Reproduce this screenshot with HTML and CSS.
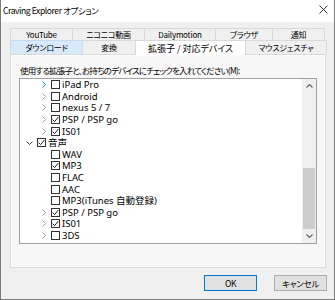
FILE: index.html
```html
<!DOCTYPE html>
<html lang="ja">

<head>
    <meta charset="UTF-8">
    <title>Craving Explorer オプション</title>
    <link rel="stylesheet" href="styles.css">
</head>

<body>
    <div class="window">
        <div class="titlebar">
            <span class="title">Craving Explorer オプション</span>
            <svg class="close" width="9" height="9" viewBox="0 0 9 9">
                <path d="M0.5 0.5 L8.5 8.5 M8.5 0.5 L0.5 8.5" stroke="#222" stroke-width="0.9" fill="none" />
            </svg>
        </div>

        <div class="client">
            <div class="tabrow row1">
                <div class="tab t-youtube">YouTube</div>
                <div class="tab t-nico">ニコニコ動画</div>
                <div class="tab t-daily">Dailymotion</div>
                <div class="tab t-browser">ブラウザ</div>
                <div class="tab t-notify">通知</div>
            </div>
            <div class="tabrow row2">
                <div class="tab hover t-download">ダウンロード</div>
                <div class="tab t-convert">変換</div>
                <div class="tab active t-ext">拡張子 / 対応デバイス</div>
                <div class="tab t-mouse">マウスジェスチャ</div>
            </div>

            <div class="panel">
                <div class="label">使用する拡張子と、お持ちのデバイスにチェックを入れてください(M):</div>
                <div class="tree">
                    <div class="rows">
                        <div class="row lv1"><span class="arrow hot"></span><span class="check"></span>iPad Pro</div>
                        <div class="row lv1"><span class="arrow"></span><span class="check"></span>Android</div>
                        <div class="row lv1"><span class="arrow"></span><span class="check"></span>nexus 5 / 7</div>
                        <div class="row lv1"><span class="arrow"></span><span class="check on"></span>PSP / PSP go</div>
                        <div class="row lv1"><span class="arrow"></span><span class="check on"></span>IS01</div>
                        <div class="row lv0"><span class="arrow open"></span><span class="check on"></span>音声</div>
                        <div class="row lv1"><span class="arrow none"></span><span class="check"></span>WAV</div>
                        <div class="row lv1"><span class="arrow none"></span><span class="check on"></span>MP3</div>
                        <div class="row lv1"><span class="arrow none"></span><span class="check"></span>FLAC</div>
                        <div class="row lv1"><span class="arrow none"></span><span class="check"></span>AAC</div>
                        <div class="row lv1"><span class="arrow none"></span><span class="check"></span>MP3(iTunes 自動登録)</div>
                        <div class="row lv1"><span class="arrow"></span><span class="check on"></span>PSP / PSP go</div>
                        <div class="row lv1"><span class="arrow"></span><span class="check on"></span>IS01</div>
                        <div class="row lv1"><span class="arrow"></span><span class="check"></span>3DS</div>
                    </div>
                    <div class="scrollbar">
                        <div class="sb-btn">
                            <svg width="7" height="4" viewBox="0 0 7 4"><path d="M0.5 3.5 L3.5 0.5 L6.5 3.5" stroke="#606060" stroke-width="1.1" fill="none" /></svg>
                        </div>
                        <div class="sb-space"></div>
                        <div class="sb-thumb"></div>
                        <div class="sb-btn">
                            <svg width="7" height="4" viewBox="0 0 7 4"><path d="M0.5 0.5 L3.5 3.5 L6.5 0.5" stroke="#606060" stroke-width="1.1" fill="none" /></svg>
                        </div>
                    </div>
                </div>
            </div>

            <div class="buttons">
                <div class="btn default">OK</div>
                <div class="btn">キャンセル</div>
            </div>
        </div>
    </div>
</body>

</html>
```

FILE: styles.css
```css
body {
    margin: 0;
    background-color: #f0f0f0;
    font-family: "Noto Sans CJK JP", "Noto Sans", sans-serif;
    font-feature-settings: "palt";
    color: #000;
}

.window {
    width: 335px;
    height: 300px;
    box-sizing: border-box;
    border: 1px solid #7a7a7a;
    border-top: none;
    background-color: #f0f0f0;
    overflow: hidden;
}

.titlebar {
    display: flex;
    align-items: center;
    justify-content: space-between;
    height: 22px;
    padding: 0 6px 3px 2px;
    box-sizing: border-box;
    background-color: #fff;
    font-size: 8.5px;
    letter-spacing: -0.4px;
}

.client {
    padding: 6px 8px 0 9px;
}

.tabrow {
    display: flex;
    font-size: 8px;
    letter-spacing: -0.2px;
}

.row1 {
    height: 12px;
    width: 315px;
}

.row2 {
    height: 14px;
}

.tab {
    display: flex;
    align-items: center;
    justify-content: center;
    box-sizing: border-box;
    border: 1px solid #d9d9d9;
    border-bottom: none;
    margin-right: -1px;
    background-color: #f0f0f0;
    white-space: nowrap;
}

.tab.hover {
    background-color: #d8eaf9;
    border-color: #c5daed;
}

.tab.active {
    background-color: #fff;
    position: relative;
    z-index: 1;
    height: 15px;
    font-size: 9px;
    letter-spacing: 0;
}

.t-youtube { width: 63px; }
.t-nico { width: 73px; }
.t-daily { width: 72px; }
.t-browser { width: 58px; }
.t-notify { width: 53px; }
.t-download { width: 73px; }
.t-convert { width: 54px; }
.t-ext { width: 111px; }
.t-mouse { width: 82px; }

.panel {
    width: 316px;
    height: 214px;
    box-sizing: border-box;
    border: 1px solid #d9d9d9;
    box-shadow: inset 0 0 0 1px #fdfdfd;
    background-color: #f7f7f7;
    padding: 9px 0 0 9px;
}

.label {
    height: 12px;
    line-height: 12px;
    font-size: 8.5px;
    letter-spacing: -0.8px;
    margin-bottom: 2px;
    white-space: nowrap;
}

.tree {
    display: flex;
    width: 298px;
    height: 166px;
    margin-left: -1px;
    box-sizing: border-box;
    border: 1px solid #a0a0a0;
    background-color: #fff;
}

.rows {
    flex: 1;
    font-family: "Noto Sans", "Noto Sans CJK JP", sans-serif;
    font-size: 9.5px;
    line-height: 11px;
}

.row {
    display: flex;
    align-items: center;
    height: 11.6px;
    white-space: nowrap;
}

.lv0 { padding-left: 6px; }
.lv1 { padding-left: 20px; }

.arrow {
    width: 7px;
    height: 7px;
    margin-right: 4px;
    background: no-repeat center / 4px 7px url("data:image/svg+xml,%3Csvg xmlns='http://www.w3.org/2000/svg' width='4' height='7'%3E%3Cpath d='M0.5 0.5 L3.5 3.5 L0.5 6.5' stroke='%23a0a0a0' fill='none'/%3E%3C/svg%3E");
}

.arrow.hot {
    background-image: url("data:image/svg+xml,%3Csvg xmlns='http://www.w3.org/2000/svg' width='4' height='7'%3E%3Cpath d='M0.5 0.5 L3.5 3.5 L0.5 6.5' stroke='%231c97ea' fill='none'/%3E%3C/svg%3E");
}

.arrow.open {
    background-size: 7px 4px;
    background-image: url("data:image/svg+xml,%3Csvg xmlns='http://www.w3.org/2000/svg' width='7' height='4'%3E%3Cpath d='M0.5 0.5 L3.5 3.5 L6.5 0.5' stroke='%23404040' fill='none'/%3E%3C/svg%3E");
}

.arrow.none {
    background: none;
}

.check {
    width: 9px;
    height: 9px;
    box-sizing: border-box;
    border: 1px solid #333;
    background-color: #fff;
    margin-right: 2px;
}

.check.on {
    background: no-repeat center / 7px 7px url("data:image/svg+xml,%3Csvg xmlns='http://www.w3.org/2000/svg' width='7' height='7'%3E%3Cpath d='M0.6 3.6 L2.6 5.6 L6.4 1' stroke='%23222' stroke-width='1' fill='none'/%3E%3C/svg%3E") #fff;
}

.scrollbar {
    display: flex;
    flex-direction: column;
    width: 14px;
    background-color: #f0f0f0;
}

.sb-btn {
    height: 14px;
    display: flex;
    align-items: center;
    justify-content: center;
}

.sb-space {
    flex: 1;
}

.sb-thumb {
    height: 61px;
    margin: 0 1px;
    background-color: #cdcdcd;
}

.buttons {
    display: flex;
    justify-content: flex-end;
    gap: 17px;
    margin-top: 7px;
    margin-right: -1px;
}

.btn {
    width: 53px;
    height: 16px;
    box-sizing: border-box;
    display: flex;
    align-items: center;
    justify-content: center;
    border: 1px solid #adadad;
    background-color: #e1e1e1;
    font-size: 8.5px;
    letter-spacing: -0.3px;
}

.btn.default {
    border-color: #0078d7;
}
```
